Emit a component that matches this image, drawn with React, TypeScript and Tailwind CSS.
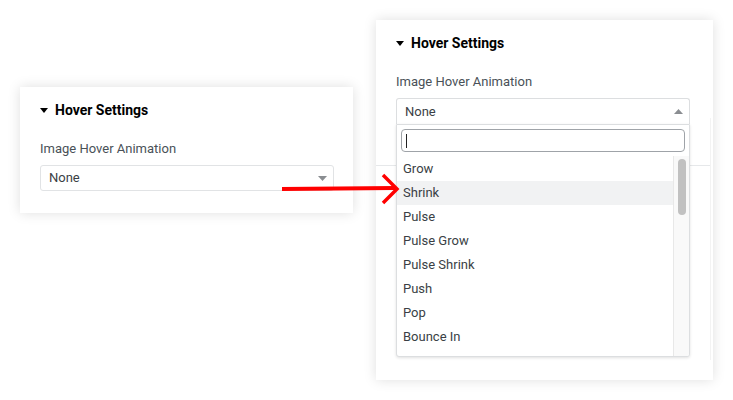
import React from "react";

const options = ["Grow", "Shrink", "Pulse", "Pulse Grow", "Pulse Shrink", "Push", "Pop", "Bounce In", "Bounce Out"];

const Caret = ({ up = false }: { up?: boolean }) => (
  <svg width="9" height="5" viewBox="0 0 9 5" className="shrink-0">
    {up ? <path d="M0 5 L4.5 0 L9 5 Z" fill="#8a8d91" /> : <path d="M0 0 L4.5 5 L9 0 Z" fill="#8a8d91" />}
  </svg>
);

const Heading = () => (
  <div className="flex items-center gap-[7px] h-[16px]">
    <svg width="8" height="5" viewBox="0 0 8 5">
      <path d="M0 0 L4 5 L8 0 Z" fill="#000" />
    </svg>
    <span className="text-[14px] font-bold text-black leading-none">Hover Settings</span>
  </div>
);

export default function App() {
  return (
    <div className="relative w-[733px] h-[400px] bg-white overflow-hidden font-['Roboto',sans-serif]">
      <div className="flex items-start pt-[20px] pl-[20px] gap-[23px]">
        {/* before */}
        <div className="mt-[67px] w-[333px] h-[126px] bg-white shadow-[0_0_12px_rgba(0,0,0,0.13)] pt-[15px] pl-[20px] pr-[19px]">
          <Heading />
          <p className="mt-[23px] text-[13px] leading-[16px] text-[#495157]">Image Hover Animation</p>
          <div className="mt-[8px] h-[26px] border border-[#e1e3e5] rounded-[3px] flex items-center justify-between pl-[8px] pr-[6px]">
            <span className="text-[13px] text-[#3a3f45]">None</span>
            <Caret />
          </div>
        </div>

        {/* after */}
        <div className="relative w-[337px] h-[360px] bg-white shadow-[0_0_12px_rgba(0,0,0,0.13)] pt-[15px] pl-[20px] pr-[23px]">
          <div className="absolute left-0 right-[3px] top-[145px] border-t border-[#e6e8ea]" />
          <div className="absolute right-[2px] top-[98px] bottom-[20px] border-r border-[#f3f3f3]" />
          <Heading />
          <p className="mt-[23px] text-[13px] leading-[16px] text-[#495157]">Image Hover Animation</p>
          <div className="relative mt-[8px] w-[294px]">
            <div className="h-[26px] border border-[#dcdee0] border-b-0 rounded-t-[3px] bg-white flex items-center justify-between pl-[8px] pr-[6px]">
              <span className="text-[13px] text-[#3a3f45]">None</span>
              <Caret up />
            </div>
            <div className="relative h-[233px] bg-white border border-[#dcdee0] rounded-b-[3px] shadow-[0_1px_3px_rgba(0,0,0,0.12)] overflow-hidden">
              <div className="px-[4px] pt-[4px] pb-[4px]">
                <div className="h-[23px] border border-[#9fa3a8] rounded-[4px] flex items-center pl-[4px]">
                  <span className="w-px h-[14px] bg-[#222]" />
                </div>
              </div>
              <div className="flex">
                <ul className="flex-1 pt-[1px]">
                  {options.map((o) => (
                    <li
                      key={o}
                      className={`h-[24px] flex items-center pl-[6px] text-[13px] text-[#3a3f45] ${o === "Shrink" ? "bg-[#f1f2f3]" : ""}`}
                    >
                      {o}
                    </li>
                  ))}
                </ul>
                <div className="w-[16px] bg-[#f9f9f9] border-l border-[#e8e8e8] flex justify-center pt-[3px]">
                  <div className="w-[8px] h-[56px] rounded-full bg-[#c1c1c1]" />
                </div>
              </div>
            </div>
          </div>
        </div>
      </div>

      {/* arrow */}
      <svg className="absolute left-[280px] top-[172px]" width="122" height="34" viewBox="0 0 122 34">
        <path d="M2 17 L115 16" stroke="#f00" strokeWidth="4" fill="none" />
        <path d="M103 3 L117 17 L103 31" stroke="#f00" strokeWidth="3.5" fill="none" strokeLinejoin="miter" />
      </svg>
    </div>
  );
}
